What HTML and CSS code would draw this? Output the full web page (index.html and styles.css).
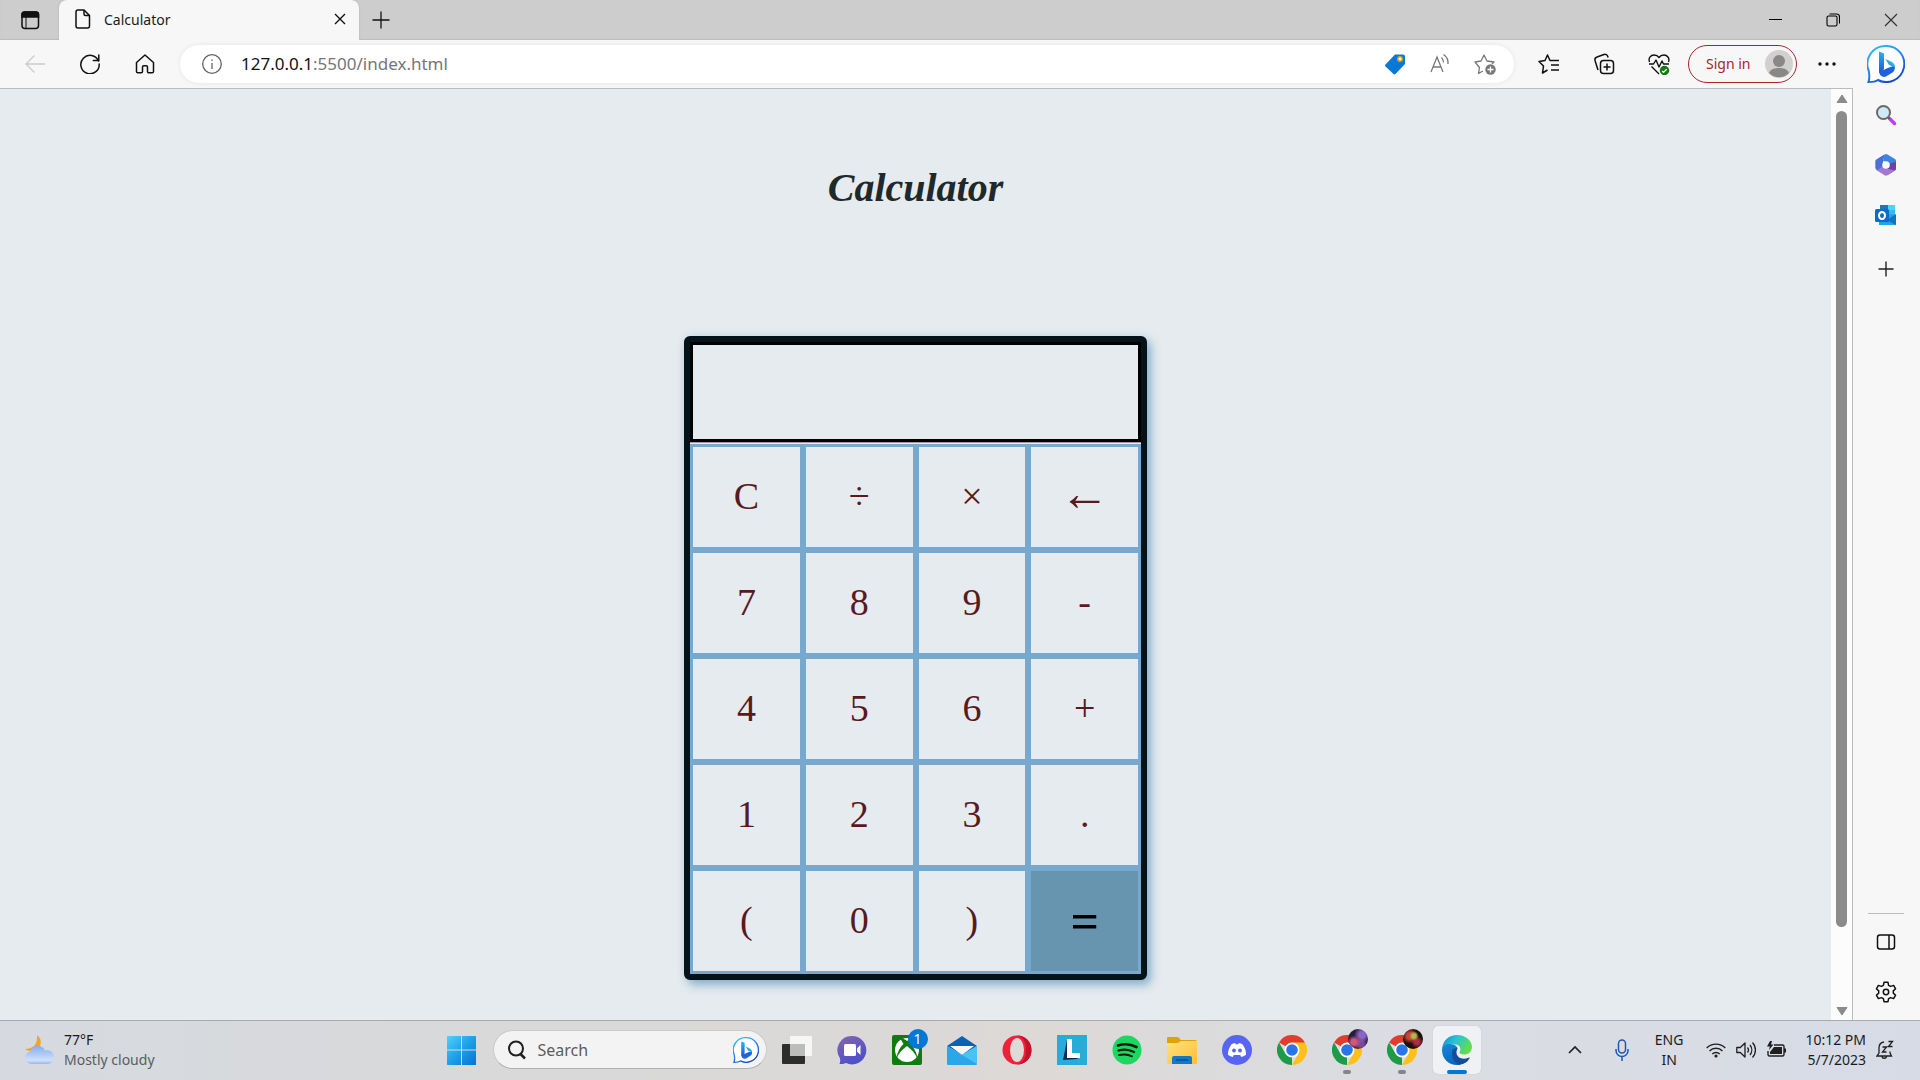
FILE: index.html
```html
<!DOCTYPE html>
<html lang="en">
<head>
<meta charset="utf-8">
<title>Calculator</title>
<link rel="stylesheet" href="styles.css">
</head>
<body>
<svg class="defs" aria-hidden="true">
  <defs>
    <linearGradient id="bingRing" x1="0" y1="0" x2="0.6" y2="1"><stop offset="0" stop-color="#2bc8f2"/><stop offset="0.5" stop-color="#2f8df0"/><stop offset="1" stop-color="#1648cf"/></linearGradient>
    <linearGradient id="bingB" x1="0" y1="0" x2="0" y2="1"><stop offset="0" stop-color="#28b4ef"/><stop offset="1" stop-color="#1b50d6"/></linearGradient>
    <linearGradient id="bingC" x1="1" y1="0" x2="0" y2="1"><stop offset="0" stop-color="#36dcdc"/><stop offset="1" stop-color="#2176e8"/></linearGradient>
    <symbol id="bing" viewBox="0 0 38 38">
      <path d="M19 1a18 18 0 1 1-8 34c-3 2-6 2-9.500 2 1.500-4 .8-8 .3-11A18 18 0 0 1 19 1z" fill="#fff" stroke="url(#bingRing)" stroke-width="2"/>
      <path d="M12 6.500l5 2v15l-2 6-3-2z" fill="url(#bingB)"/>
      <path d="M12.500 27l7-3.500 8-3c1 3 0 5.500-2 7l-6.500 4c-3 1.500-7-1-6.500-4.500z" fill="#1e62df"/>
      <path d="M18.500 14l5.500 2.500c3 1.500 4 3 4 6.500-2-2-4-2-6-3z" fill="url(#bingC)"/>
    </symbol>
    <symbol id="chrome" viewBox="0 0 30 30">
      <path d="M15 15L2 7.500A15 15 0 0 1 28 7.500z" fill="#e33b2e"/>
      <path d="M15 15v15A15 15 0 0 1 2 7.500l6.500 11.300z" fill="#1f9a48"/>
      <path d="M15 7.500h13A15 15 0 0 1 15 30l6.500-11.300z" fill="#fcc018"/>
      <circle cx="15" cy="15" r="7.500" fill="#fff"/><circle cx="15" cy="15" r="5.800" fill="#2a74ea"/>
    </symbol>
  </defs>
</svg>

<header class="tabbar">
  <button class="icon-btn workspaces" aria-label="Tab actions"><svg width="20" height="20" viewBox="0 0 20 20" fill="none" stroke="#111" stroke-width="1.500"><rect x="2" y="2" width="16.500" height="16.500" rx="3"/><path d="M2 7h16.500V4.500a2.500 2.500 0 0 0-2.500-2.500H4.500A2.500 2.500 0 0 0 2 4.500z" fill="#111"/><path d="M6 7v11" stroke-width="1"/></svg></button>
  <div class="tab">
    <svg width="18" height="20" viewBox="0 0 18 20" fill="none" stroke="#111" stroke-width="1.500" stroke-linejoin="round"><path d="M4 1h6l5.500 5.500V17a2 2 0 0 1-2 2H4a2 2 0 0 1-2-2V3a2 2 0 0 1 2-2z"/><path d="M10 1v4a1.500 1.500 0 0 0 1.500 1.500h4"/></svg>
    <span class="tab-title">Calculator</span>
    <button class="icon-btn" aria-label="Close tab"><svg width="12" height="12" viewBox="0 0 12 12" stroke="#111" stroke-width="1.400"><path d="M1 1l10 10M11 1L1 11"/></svg></button>
  </div>
  <button class="icon-btn new-tab" aria-label="New tab"><svg width="18" height="18" viewBox="0 0 18 18" stroke="#111" stroke-width="1.300"><path d="M9 .5v17M.5 9h17"/></svg></button>
  <div class="window-controls">
    <button class="icon-btn" aria-label="Minimize"><svg width="14" height="14" viewBox="0 0 14 14"><path d="M1 6.500h13" stroke="#000"/></svg></button>
    <button class="icon-btn" aria-label="Restore"><svg width="14" height="14" viewBox="0 0 14 14" fill="none" stroke="#000" stroke-width="1.100"><rect x="1" y="3" width="10" height="10" rx="1.500"/><path d="M3.500 1h7a3 3 0 0 1 3 3v6.500"/></svg></button>
    <button class="icon-btn" aria-label="Close"><svg width="14" height="14" viewBox="0 0 14 14" stroke="#333" stroke-width="1.200"><path d="M1 1l12 12M13 1L1 13"/></svg></button>
  </div>
</header>

<div class="window">
  <div class="content">
    <nav class="toolbar">
      <div class="nav-buttons">
        <button class="icon-btn" aria-label="Back"><svg width="20" height="20" viewBox="0 0 20 20" fill="none" stroke="#ccc" stroke-width="1.300"><path d="M20 10H1M9.500 1.500L1 10l8.500 8.500"/></svg></button>
        <button class="icon-btn" aria-label="Refresh"><svg width="20" height="20" viewBox="0 0 20 20" fill="none" stroke="#111" stroke-width="1.500" stroke-linecap="round"><path d="M18.500 7A9.200 9.200 0 1 0 19.200 10"/><path d="M18.800 1v5.500h-5.500"/></svg></button>
        <button class="icon-btn" aria-label="Home"><svg width="20" height="20" viewBox="0 0 20 20" fill="none" stroke="#111" stroke-width="1.500" stroke-linejoin="round"><path d="M10 1L1.500 8.500V17.500a1.300 1.300 0 0 0 1.300 1.300h3.400a1.300 1.300 0 0 0 1.300-1.300v-4.500a1.300 1.300 0 0 1 1.300-1.300h2.400a1.300 1.300 0 0 1 1.300 1.300v4.500a1.300 1.300 0 0 0 1.300 1.300h3.400a1.300 1.300 0 0 0 1.300-1.300V8.500z"/></svg></button>
      </div>
      <div class="address">
        <svg width="20" height="20" viewBox="0 0 20 20" fill="none" stroke="#666" stroke-width="1.300"><circle cx="10" cy="10" r="9.300"/><path d="M10 9v6M10 5.500v1.500"/></svg>
        <span class="url"><b>127.0.0.1</b>:5500/index.html</span>
        <div class="address-actions">
          <button class="icon-btn" aria-label="Shopping"><svg width="22" height="22" viewBox="0 0 22 22"><path d="M11 1.500h8A2 2 0 0 1 21 3.500v7.500L11.500 21a1.500 1.500 0 0 1-2 0L1.500 13.500a1.500 1.500 0 0 1 0-2z" fill="#0a78d6"/><circle cx="16" cy="6" r="2.200" fill="#fff" stroke="#e6a400" stroke-width="1.500"/></svg></button>
          <button class="icon-btn" aria-label="Read aloud"><svg width="22" height="22" viewBox="0 0 22 22" fill="none" stroke="#777" stroke-width="1.300"><path d="M2 19L8 4l6 15M4 14h8M12.500 4.500c1.500 1.500 2 3 2 5M14.500 1.500C18 4 19.500 7 19 11"/></svg></button>
          <button class="icon-btn" aria-label="Add to favorites"><svg width="22" height="22" viewBox="0 0 22 22" fill="none" stroke="#777" stroke-width="1.300" stroke-linejoin="round"><path d="M9 18l-4.500 2.500 1-6L1 9l6-1 3-6 3 6 7 1-2 2"/><circle cx="16.500" cy="16.500" r="5.200" fill="#777" stroke="none"/><path d="M16.500 13.500v6M13.500 16.500h6" stroke="#fff"/></svg></button>
        </div>
      </div>
      <div class="tools">
        <button class="icon-btn" aria-label="Favorites"><svg width="22" height="22" viewBox="0 0 22 22" fill="none" stroke="#111" stroke-width="1.500" stroke-linejoin="round"><path d="M21 7.500h-9L9.500 2 7 7.500 1 8.500l4.500 4.500-1 7 5-3M13 12h8M13 17h8"/></svg></button>
        <button class="icon-btn" aria-label="Collections"><svg width="22" height="22" viewBox="0 0 22 22" fill="none" stroke="#111" stroke-width="1.500"><rect x="7.500" y="7.500" width="13" height="13" rx="3"/><path d="M14 10.500v7M10.500 14h7M5 17l-3-9.500A3 3 0 0 1 4 4l7-2.500a3 3 0 0 1 3.800 2l.3 1"/></svg></button>
        <button class="icon-btn" aria-label="Browser essentials"><svg width="22" height="22" viewBox="0 0 22 22" fill="none" stroke="#111" stroke-width="1.400" stroke-linejoin="round"><path d="M1.500 9C0 4.500 3 2 6 2c2.500 0 4 1 5 2.500C12 3 13.500 2 16 2c3 0 6 3 4.500 7M1 11h4.500l2.500-4 3 7 3-6 1.500 3H21M3.500 13.500L11 21"/><circle cx="16.500" cy="17.500" r="4.700" fill="#107c10" stroke="none"/><path d="M14 18l1.500 1.200 3.200-3" stroke="#fff"/></svg></button>
      </div>
      <button class="sign-in">Sign in<svg width="28" height="28" viewBox="0 0 28 28"><circle cx="14" cy="14" r="14" fill="#d2d0ce"/><circle cx="14" cy="11" r="6" fill="#8a8886"/><path d="M4 23c2-4.500 6-5 10-5s8 .5 10 5a14 14 0 0 1-20 0z" fill="#8a8886"/></svg></button>
      <button class="icon-btn" aria-label="Settings and more"><svg width="20" height="20" viewBox="0 0 20 20" fill="#111"><circle cx="3" cy="10" r="1.700"/><circle cx="10" cy="10" r="1.700"/><circle cx="17" cy="10" r="1.700"/></svg></button>
    </nav>
    <div class="view">
      <main class="page">
        <h1 class="title">Calculator</h1>
        <section class="calculator">
          <input class="display" type="text" aria-label="Result" readonly>
          <div class="keys">
            <button class="key">C</button><button class="key">÷</button><button class="key">×</button><button class="key back">←</button>
            <button class="key">7</button><button class="key">8</button><button class="key">9</button><button class="key">-</button>
            <button class="key">4</button><button class="key">5</button><button class="key">6</button><button class="key">+</button>
            <button class="key">1</button><button class="key">2</button><button class="key">3</button><button class="key">.</button>
            <button class="key">(</button><button class="key">0</button><button class="key">)</button><button class="key equals">=</button>
          </div>
        </section>
      </main>
      <div class="scrollbar">
        <svg width="12" height="9" viewBox="0 0 12 9"><path d="M6 1l5 7.500H1z" fill="#8b8b8b" stroke="#8b8b8b" stroke-linejoin="round"/></svg>
        <div class="track"><div class="thumb"></div></div>
        <svg width="12" height="9" viewBox="0 0 12 9"><path d="M6 8L1 .5h10z" fill="#8b8b8b" stroke="#8b8b8b" stroke-linejoin="round"/></svg>
      </div>
    </div>
  </div>
  <aside class="sidebar">
    <button class="icon-btn bing-btn" aria-label="Bing"><svg width="38" height="38"><use href="#bing"/></svg></button>
    <div class="side-apps">
      <button class="icon-btn" aria-label="Search"><svg width="22" height="22" viewBox="0 0 22 22"><path d="M14.500 14.500l5 5" stroke="#c23cf0" stroke-width="3.500" stroke-linecap="round"/><path d="M12 12l2.500 2.500" stroke="#555" stroke-width="2"/><circle cx="8.500" cy="8.500" r="6.500" fill="#cfe9f8" stroke="#6a6a6a" stroke-width="2"/></svg></button>
      <button class="icon-btn" aria-label="Microsoft 365"><svg width="22" height="22" viewBox="0 0 22 22"><path d="M9.500.5L8 7v6.500L7 19l-5.500-3A2 2 0 0 1 .5 14V7.500a2 2 0 0 1 1-2z" fill="#9a7fdc"/><path d="M9.500.5L8 7v5L2.500 16.500.5 14V7.500a2 2 0 0 1 1-2z" fill="#4a6fd8"/><path d="M9.500.5a3 3 0 0 1 3 0L20 5a2 2 0 0 1 1 2v7l-6.500-4.500L8 7z" fill="#3c86e0"/><path d="M21 8v7a2 2 0 0 1-1 1.500L12.500 21 9 14l5.500-4.500z" fill="#6b44a6"/><path d="M1.500 16L8 13.500l12 3-7.500 4.800a3 3 0 0 1-3 0z" fill="#a477d2"/><circle cx="11" cy="11" r="3.800" fill="#f7f7f7"/></svg></button>
      <button class="icon-btn" aria-label="Outlook"><svg width="22" height="22" viewBox="0 0 22 22"><path d="M5 1h15v12H5z" fill="#35b8f0"/><path d="M5 1h8v6H5z" fill="#1478c8"/><path d="M13 1h7v5h-7z" fill="#4bd4fa"/><path d="M4 9l17 2v10H4z" fill="#1ea4e8"/><path d="M21 10v11l-9-5z" fill="#1272bb"/><rect x="0" y="5" width="14" height="13" rx="1.500" fill="#0a6cc8"/><ellipse cx="7" cy="11.500" rx="3" ry="3.500" fill="none" stroke="#fff" stroke-width="2"/></svg></button>
      <button class="icon-btn add-app" aria-label="Customize"><svg width="22" height="22" viewBox="0 0 22 22" stroke="#222" stroke-width="1.400"><path d="M11 3.500v15M3.500 11h15"/></svg></button>
    </div>
    <div class="side-bottom">
      <button class="icon-btn" aria-label="Hide sidebar"><svg width="22" height="22" viewBox="0 0 22 22" fill="none" stroke="#111" stroke-width="1.500"><rect x="2.500" y="4" width="17" height="14" rx="2.500"/><path d="M14 4v14"/></svg></button>
      <button class="icon-btn" aria-label="Settings"><svg width="22" height="22" viewBox="0 0 22 22" fill="none" stroke="#111" stroke-width="1.500" stroke-linejoin="round"><circle cx="11" cy="11" r="2.700"/><path d="M9 1.300h4l.6 3 2 1.100 3-1 2 3.400-2.300 2.100v2.200l2.300 2.100-2 3.400-3-1-2 1.100-.6 3H9l-.6-3-2-1.100-3 1-2-3.400 2.300-2.100V9.900L1.400 7.800l2-3.400 3 1 2-1.100z"/></svg></button>
    </div>
  </aside>
</div>

<footer class="taskbar">
  <div class="weather">
    <svg width="31" height="31" viewBox="0 0 31 31"><defs><linearGradient id="cloud" x1="0" y1="0" x2="0" y2="1"><stop offset="0" stop-color="#86acee"/><stop offset="0.800" stop-color="#cfe0fb"/><stop offset="1" stop-color="#9ab5ee"/></linearGradient></defs><path d="M13 1c5 4 5 10 1 13-4 4-9 4-13 1 8 0 13-5 12-14z" fill="#f1a42c"/><path d="M7 30a7 6.500 0 0 1-1-12.500C8 12.500 13 10 18 13c1.500 1 2.500 2 3 3.500 5-1.500 9 2 9 6.500s-3 7-7 7z" fill="url(#cloud)"/></svg>
    <div class="weather-text"><span>77°F</span><span class="muted">Mostly cloudy</span></div>
  </div>
  <div class="dock">
    <button class="icon-btn start" aria-label="Start"><svg width="30" height="30" viewBox="0 0 30 30"><defs><linearGradient id="win" x1="0" y1="0" x2="1" y2="1"><stop offset="0" stop-color="#4fd2fc"/><stop offset="0.500" stop-color="#1e9fe8"/><stop offset="1" stop-color="#0474d4"/></linearGradient></defs><path d="M1.500 1H15v13.500H1V1.500zM16 1h13.500l.5.500v13H16zM1 15.500h14V30H1.500l-.5-.5zM16 15.500h14v14l-.5.500H16z" fill="url(#win)"/></svg></button>
    <label class="search">
      <svg width="20" height="20" viewBox="0 0 20 20" fill="none" stroke="#1f1f1f" stroke-width="2"><circle cx="9" cy="8.500" r="7"/><path d="M13.500 14l4.500 4.500" stroke-width="2.500"/></svg>
      <input type="text" placeholder="Search" aria-label="Search">
      <svg width="26" height="26"><use href="#bing"/></svg>
    </label>
    <div class="apps">
      <button class="app" aria-label="Task view"><svg width="30" height="30" viewBox="0 0 30 30"><rect x="0" y="9" width="23" height="20" rx="1" fill="#2d2d2b"/><rect x="8" y="1" width="22" height="20" rx="1" fill="#f8f8f8" fill-opacity=".95"/><path d="M8 9h15v12H8z" fill="#bcbcba"/></svg></button>
      <button class="app" aria-label="Chat"><svg width="30" height="30" viewBox="0 0 30 30"><defs><linearGradient id="chat" x1="0" y1="0" x2="0.500" y2="1"><stop offset="0" stop-color="#8663b0"/><stop offset="1" stop-color="#4d50cc"/></linearGradient></defs><path d="M15 1a14.200 14.200 0 1 1-6 27c-2 1-4 1-6.500 1 .8-2 1-4 .3-6A14.200 14.200 0 0 1 15 1z" fill="url(#chat)"/><rect x="7" y="9" width="12" height="12" rx="1.500" fill="#fff"/><path d="M20 13.500l3.500-3.500v10L20 16.500z" fill="#fff"/></svg></button>
      <button class="app" aria-label="Xbox"><svg width="30" height="30" viewBox="0 0 30 30"><rect width="30" height="30" rx="2" fill="#107c10"/><circle cx="15" cy="15" r="12" fill="#fff"/><path d="M8 3c3 0 6 2 7 3 2-1.500 4-3 7-3l-3 6c3 4 6 9 6.500 14.500C23 18 19 14 15 11 10 14.500 7 18 4.500 23.500 5 18 8 12 11.500 9z" fill="#107c10"/></svg><span class="badge">1</span></button>
      <button class="app" aria-label="Mail"><svg width="30" height="30" viewBox="0 0 30 30"><path d="M0 11L15 1l15 10-15 9z" fill="#0b62b4"/><path d="M3 11h24l-12 9z" fill="#f5f5f5"/><path d="M0 11l15 9 15-9v18a1 1 0 0 1-1 1H1a1 1 0 0 1-1-1z" fill="#2ba6ea"/><path d="M15 20l15-9v18z" fill="#47c4f4"/></svg></button>
      <button class="app" aria-label="Opera"><svg width="30" height="30" viewBox="0 0 30 30"><circle cx="15" cy="15" r="14.500" fill="#f2203a"/><path d="M15 .5C24 .5 29.500 7 29.500 15S24 29.500 15 29.500c8-2 9-8 9-14.500s-1-12.500-9-14.500z" fill="#c3122c"/><ellipse cx="15" cy="15" rx="7" ry="12" fill="#dddad8"/></svg></button>
      <button class="app" aria-label="L"><svg width="30" height="30" viewBox="0 0 30 30"><path d="M0 0h30v30H0z" fill="#25acd8"/><path d="M10 5l3-1v17h10l-3 3-14 1z" fill="#0e2a56"/><path d="M10 4h5v14h8v5H10z" fill="#fff"/></svg></button>
      <button class="app" aria-label="Spotify"><svg width="30" height="30" viewBox="0 0 30 30" fill="none" stroke="#0d1a10" stroke-linecap="round"><circle cx="15" cy="15" r="14.500" fill="#1ed760" stroke="none"/><path d="M6 10.500c6-2 13-1.300 18.500 1.500" stroke-width="2.700"/><path d="M6.500 15.500c5-1.500 11-1 15.500 1.500" stroke-width="2.300"/><path d="M7 20c4.500-1 9-.8 13 1.300" stroke-width="2"/></svg></button>
      <button class="app" aria-label="File Explorer"><svg width="30" height="30" viewBox="0 0 30 30"><defs><linearGradient id="folder" x1="0" y1="0" x2="1" y2="1"><stop offset="0" stop-color="#ffe083"/><stop offset="1" stop-color="#fbc22d"/></linearGradient></defs><path d="M0 3a1 1 0 0 1 1-1h10l3 3h14a2 2 0 0 1 2 2v5H0z" fill="#e3a008"/><path d="M0 8h11l3-2h15a1 1 0 0 1 1 1v21a1 1 0 0 1-1 1H1a1 1 0 0 1-1-1z" fill="url(#folder)"/><path d="M5 29v-6a2 2 0 0 1 2-2h16a2 2 0 0 1 2 2v6z" fill="#1378c8"/><path d="M9 25h12" stroke="#0a4f8e" stroke-width="1.500"/></svg></button>
      <button class="app" aria-label="Discord"><svg width="30" height="30" viewBox="0 0 30 30"><circle cx="15" cy="15" r="15" fill="#5865f2"/><path d="M9.500 9.300c1.200-.6 2.400-1 3.600-1.200l.6 1.200h2.600l.6-1.200c1.200.2 2.400.6 3.600 1.200 2.200 3.200 3.800 6.700 3.500 10.400-1.500 1.200-3 1.800-4.800 2.200l-1-1.900H11.800l-1 1.900c-1.800-.4-3.300-1-4.800-2.200-.3-3.700 1.300-7.200 3.500-10.400z" fill="#fff"/><circle cx="12" cy="15.500" r="1.900" fill="#5865f2"/><circle cx="18" cy="15.500" r="1.900" fill="#5865f2"/></svg></button>
      <button class="app" aria-label="Chrome"><svg width="30" height="30"><use href="#chrome"/></svg></button>
      <button class="app running" aria-label="Chrome profile 1"><svg width="30" height="30"><use href="#chrome"/></svg><span class="avatar violet"></span></button>
      <button class="app running" aria-label="Chrome profile 2"><svg width="30" height="30"><use href="#chrome"/></svg><span class="avatar ember"></span></button>
      <button class="app active" aria-label="Edge"><svg width="30" height="30" viewBox="0 0 30 30"><defs><linearGradient id="edgeTop" x1="0" y1="0" x2="1" y2="0.400"><stop offset="0" stop-color="#1688d0"/><stop offset="0.500" stop-color="#2cc4d0"/><stop offset="1" stop-color="#63dd4c"/></linearGradient><linearGradient id="edgeLow" x1="0" y1="0" x2="0.600" y2="1"><stop offset="0" stop-color="#1589dc"/><stop offset="1" stop-color="#0a62b8"/></linearGradient></defs><path d="M0 14C1 5 7 0 15 0c9 0 15 6 15 12 0 5-4 7.500-8 7.500-3 0-5-1-4.500-2.500 2-3 1-7-4.500-7.500C7 9 1 11 0 14z" fill="url(#edgeTop)"/><path d="M0 15c0-4 4-6.500 8-6 4 .3 7 2 7.500 4-5 1-5.500 7-2 10.500 3 3 8 4 13 1.500C24 28.500 19 30 15 30 7 30 0 24 0 15z" fill="url(#edgeLow)"/><path d="M10.500 15c-2 7 2 13.500 7 14.500 4-.5 8-3 10-6 .5-1-.3-1.200-1-.8-6 2.500-11.500 0-12-4.700-.2-2.500 1-4 1-5-2-.2-4 .5-5 2z" fill="#104f98"/></svg></button>
    </div>
  </div>
  <div class="tray">
    <svg class="chevron" width="14" height="14" viewBox="0 0 14 14" fill="none" stroke="#222" stroke-width="1.700"><path d="M1 10l6-6 6 6"/></svg>
    <svg class="mic" width="14" height="22" viewBox="0 0 14 22" fill="none" stroke="#1a5ab0" stroke-width="1.500"><rect x="3.500" y="1" width="7" height="13" rx="3.500"/><path d="M1 10v1.500a6 6 0 0 0 12 0V10M7 17.500V22"/></svg>
    <div class="lang"><span>ENG</span><span>IN</span></div>
    <div class="status">
      <svg width="20" height="18" viewBox="0 0 20 18" fill="none" stroke="#1f1f1f" stroke-width="1.400"><path d="M.7 7a13 13 0 0 1 18.600 0M3.500 10a9.200 9.200 0 0 1 13 0M6.300 13a5.300 5.300 0 0 1 7.400 0"/><circle cx="10" cy="15" r="1.600" fill="#1f1f1f" stroke="none"/></svg>
      <svg width="20" height="18" viewBox="0 0 20 18" fill="none" stroke="#1f1f1f" stroke-width="1.300" stroke-linejoin="round"><path d="M.8 6.500h3.500L9 2v14l-4.700-4.500H.8zM11.500 6.500a4 4 0 0 1 0 5M14 4a8 8 0 0 1 0 10M16.500 1.500a11 11 0 0 1 0 15"/></svg>
      <svg width="20" height="18" viewBox="0 0 20 18" fill="none" stroke="#1f1f1f" stroke-width="1.400"><path d="M8 4h8.500a1.500 1.500 0 0 1 1.500 1.500v8a1.500 1.500 0 0 1-1.500 1.500h-13A1.500 1.500 0 0 1 2 13.500V10"/><path d="M8 6h8v7H4v-2z" fill="#1f1f1f" stroke="none"/><path d="M18 7.500h2v4h-2zM4 0h2L5 3.500h2.500L3 9l.8-3.500H1z" fill="#1f1f1f" stroke="none"/></svg>
    </div>
    <div class="clock"><span>10:12 PM</span><span>5/7/2023</span></div>
    <svg width="18" height="20" viewBox="0 0 18 20" fill="none" stroke="#1f1f1f" stroke-width="1.300"><path d="M8 2C4.500 2.500 3 5 3 8v5l-2 3h14.500l-1.500-3v-1.500M6 16c0 3 4.500 3 4.500 0M6.500 7h4l-4 5h4M12.500 1.500h4l-4 5h4"/></svg>
  </div>
</footer>
</body>
</html>
```
FILE: styles.css
```css
* { box-sizing: border-box; }

body {
  margin: 0;
  height: 100vh;
  display: flex;
  flex-direction: column;
  overflow: hidden;
  font-family: "Noto Sans", "Open Sans", sans-serif;
  font-size: 14px;
  color: #1b1b1b;
  background: #f7f7f7;
}

svg { display: block; flex: none; }
.defs { position: absolute; width: 0; height: 0; }

button { font: inherit; color: inherit; cursor: pointer; }
.icon-btn { border: 0; padding: 0; background: none; display: flex; }

/* Tab strip */
.tabbar {
  flex: none;
  height: 40px;
  display: flex;
  align-items: center;
  background: #cdcdcd;
  box-shadow: inset 0 -1px 1px #bdbdbd;
}
.workspaces { margin: 0 19px 0 20px; }
.tab {
  height: 40px;
  width: 300px;
  padding: 0 13px 2px 15px;
  display: flex;
  align-items: center;
  gap: 12px;
  background: #f7f7f7;
  border-radius: 8px 8px 0 0;
  box-shadow: 0 0 2px #aaa;
}
.tab-title { flex: 1; }
.new-tab { margin-left: 13px; }
.window-controls { margin-left: auto; padding-right: 22px; display: flex; gap: 44px; }

/* Window body */
.window { flex: 1; min-height: 0; display: flex; }
.content {
  flex: 1;
  min-width: 0;
  display: flex;
  flex-direction: column;
}
.toolbar {
  flex: none;
  height: 49px;
  padding: 4px 16px 5px 25px;
  display: flex;
  align-items: center;
  background: #f7f7f7;
  border-bottom: 1px solid #b9bcbd;
}
.nav-buttons { display: flex; gap: 35px; }
.address {
  flex: 1;
  height: 38px;
  margin: 0 24px 0 25px;
  padding: 0 18px 0 22px;
  display: flex;
  align-items: center;
  border-radius: 19px;
  background: #fff;
  box-shadow: 0 0 4px #e4e4e4;
}
.url { flex: 1; margin-left: 19px; font-size: 17px; color: #767676; }
.url b { font-weight: 400; color: #111; }
.address-actions { display: flex; gap: 23px; }
.tools { display: flex; gap: 33px; }
.sign-in {
  height: 38px;
  width: 109px;
  margin: 0 20px 0 18px;
  padding: 0 3px 0 17px;
  display: flex;
  align-items: center;
  justify-content: space-between;
  border: 1px solid #a4262c;
  border-radius: 19px;
  background: none;
  color: #a4262c;
}

.view { flex: 1; min-height: 0; display: flex; }
.page {
  flex: 1;
  padding-top: 75px;
  display: flex;
  flex-direction: column;
  align-items: center;
  background: #e5ebee;
  font-family: "Liberation Serif", "Times New Roman", serif;
}
.title {
  margin: 0 0 124px;
  font-size: 40px;
  line-height: 48px;
  font-style: italic;
  color: #1f292b;
}
.calculator {
  width: 463px;
  border: 6px solid #04121a;
  border-radius: 6px;
  background: #e5ebee;
  box-shadow: 0 0 12px rgba(0, 0, 0, .05), 4px 5px 10px rgba(90, 150, 195, .65);
}
.display {
  display: block;
  width: 100%;
  height: 100px;
  margin-bottom: 2px;
  padding: 0 12px;
  border: 3px solid #000;
  background: transparent;
  font: 38px "Liberation Serif", serif;
  text-align: right;
  outline: 0;
  box-shadow: 0 1px 0 #a59b9d;
}
.keys { display: grid; grid-template-columns: repeat(4, 1fr); }
.key {
  height: 106px;
  padding: 0 0 2px;
  border: 3px solid #76a9cd;
  background: #e5ebee;
  color: #58191f;
  font-size: 38px;
}
.back { padding-bottom: 8px; font-size: 50px; }
.equals {
  padding: 0;
  background: #6795b0;
  color: #000;
  font-size: 50px;
  font-weight: 700;
}

.scrollbar {
  width: 22px;
  padding: 5px 0 4px;
  display: flex;
  flex-direction: column;
  align-items: center;
  background: #fcfcfc;
  border-right: 1px solid #b9bcbd;
}
.track { flex: 1; width: 11px; padding: 8px 0 9px; }
.thumb { height: 92%; border-radius: 6px; background: #8b8b8b; }

.sidebar {
  width: 67px;
  padding: 5px 1px 0 0;
  display: flex;
  flex-direction: column;
  align-items: center;
}
.side-apps { margin-top: 21px; display: flex; flex-direction: column; gap: 28px; }
.add-app { margin-top: 4px; }
.side-bottom {
  width: 36px;
  margin-top: auto;
  padding: 17px 0;
  display: flex;
  flex-direction: column;
  align-items: center;
  gap: 28px;
  border-top: 1px solid #bcbcbc;
}

/* Taskbar */
.taskbar {
  flex: none;
  height: 60px;
  padding: 0 0 2px 6px;
  display: grid;
  grid-template-columns: 1fr auto 1fr;
  align-items: center;
  border-top: 1px solid #a9acaf;
  background: linear-gradient(90deg, #d6dae0, #d9d9d9 28%, #dcd9d7 55%, #dbdde3 75%, #d7dbe6);
}
.weather { display: flex; align-items: center; gap: 9px; padding-left: 18px; }
.weather-text, .lang, .clock { display: flex; flex-direction: column; line-height: 20px; }
.muted { color: #5a5d60; }

.dock { display: flex; align-items: center; }
.search {
  width: 274px;
  height: 39px;
  margin: 0 15px 0 17px;
  padding: 0 7px 0 13px;
  display: flex;
  align-items: center;
  gap: 11px;
  border: 1px solid #cacaca;
  border-bottom-color: #b0b0b0;
  border-radius: 20px;
  background: #f3f3f3;
}
.search input {
  flex: 1;
  min-width: 0;
  padding: 0;
  border: 0;
  outline: 0;
  background: none;
  font: 16px "Noto Sans", sans-serif;
}
.search input::placeholder { color: #5c5c5c; opacity: 1; }
.apps { display: flex; gap: 7px; margin-left: -9px; }
.app {
  position: relative;
  width: 48px;
  height: 48px;
  padding: 0;
  display: grid;
  place-items: center;
  border: 0;
  border-radius: 5px;
  background: none;
}
.active { background: #f0f1f4; box-shadow: 0 0 1px #aaa; }
.running::after, .active::after {
  content: "";
  position: absolute;
  bottom: 0;
  left: 20px;
  width: 8px;
  height: 4px;
  border-radius: 2px;
  background: #858585;
}
.active::after { left: 14px; width: 20px; background: #0078d4; }
.badge, .avatar {
  position: absolute;
  top: 3px;
  right: 3px;
  width: 20px;
  height: 20px;
  border-radius: 50%;
}
.badge { background: #0078d4; color: #fff; font-size: 14px; line-height: 20px; }
.violet { background: radial-gradient(circle at 30% 65%, #d0587a 0 14%, transparent 34%), radial-gradient(circle at 70% 30%, #8d65c8 0 16%, transparent 40%), radial-gradient(circle at 65% 75%, #7a4a94 0 14%, transparent 34%), #2a1c3e; }
.ember { background: radial-gradient(circle at 55% 35%, #b0b84c 0 12%, transparent 28%), radial-gradient(circle at 35% 35%, #c84436 0 18%, transparent 42%), radial-gradient(circle at 70% 65%, #b22c44 0 12%, transparent 32%), #1c100c; }

.tray { display: flex; align-items: center; justify-content: flex-end; padding-right: 26px; }
.mic { margin: 0 26px 0 33px; }
.lang { align-items: center; }
.status { display: flex; gap: 10px; margin: 0 19px 0 23px; }
.clock { align-items: flex-end; margin-right: 10px; }
```
